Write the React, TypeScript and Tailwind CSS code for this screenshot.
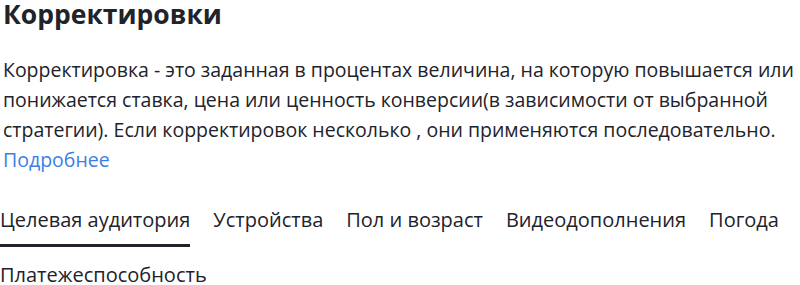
const tabs = [
  'Целевая аудитория',
  'Устройства',
  'Пол и возраст',
  'Видеодополнения',
  'Погода',
  'Платежеспособность',
];

export default function App() {
  return (
    <div
      className="h-[285px] w-[800px] overflow-hidden bg-white pl-[3px] text-[#21232b]"
      style={{ fontFamily: '"Open Sans", "Noto Sans", sans-serif' }}
    >
      <h1 className="-mt-[4px] text-[26.5px] font-bold leading-[36px]">
        Корректировки
      </h1>
      <p className="mt-[23px] whitespace-nowrap text-[19.5px] leading-[30px]">
        Корректировка - это заданная в процентах величина, на которую повышается или
        <br />
        понижается ставка, цена или ценность конверсии(в зависимости от выбранной
        <br />
        стратегии). Если корректировок несколько , они применяются последовательно.
      </p>
      <a className="block text-[19.5px] leading-[30px] text-[#3b7fe6]">Подробнее</a>
      <div className="mt-[30px] -ml-[3px] flex flex-wrap gap-x-[23px] gap-y-[13px]">
        {tabs.map((t, i) => (
          <div key={t} className="flex flex-col">
            <span className="whitespace-nowrap text-[20px] leading-[30px]">{t}</span>
            <div
              className={
                i === 0 ? 'mt-[9px] h-[3px] bg-[#21232b]' : 'mt-[9px] h-[3px]'
              }
            />
          </div>
        ))}
      </div>
    </div>
  );
}
